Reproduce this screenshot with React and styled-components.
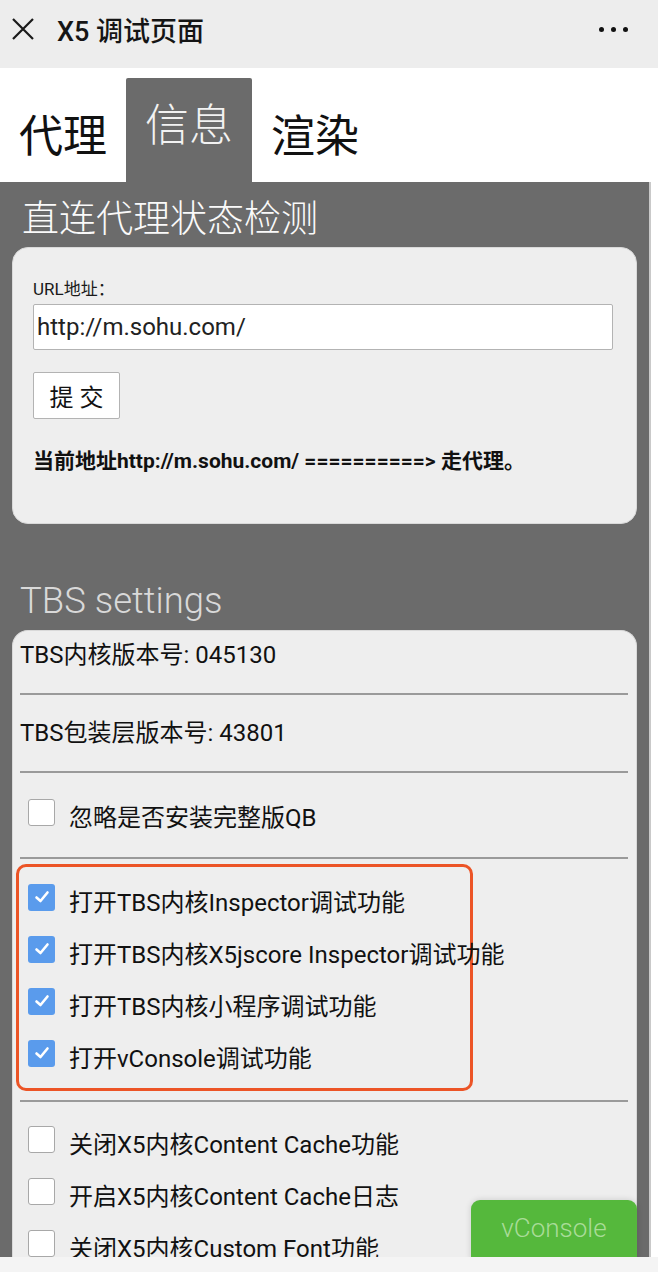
import styled, { createGlobalStyle } from 'styled-components';

const GlobalStyle = createGlobalStyle`
  html, body {
    margin: 0;
    padding: 0;
    background: #fff;
  }
  body {
    font-family: Roboto, "Noto Sans CJK SC", sans-serif;
    color: #111;
  }
  * {
    box-sizing: border-box;
  }
`;

const checkedItems = [
  '打开TBS内核Inspector调试功能',
  '打开TBS内核X5jscore Inspector调试功能',
  '打开TBS内核小程序调试功能',
  '打开vConsole调试功能',
];

const cacheItems = [
  '关闭X5内核Content Cache功能',
  '开启X5内核Content Cache日志',
  '关闭X5内核Custom Font功能',
];

const CloseIcon = () => (
  <svg width='24' height='24' viewBox='0 0 24 24'>
    <path d='M2 2 L22 22 M22 2 L2 22' stroke='#1a1a1a' strokeWidth='2.2' fill='none' />
  </svg>
);

const Check = ({ checked }) => (
  <Box $checked={checked}>
    {checked && (
      <svg width='18' height='18' viewBox='0 0 18 18'>
        <polyline points='3.5,9.5 7.5,13 14.5,4.5' fill='none' stroke='#fff' strokeWidth='2.6' strokeLinecap='round' strokeLinejoin='round' />
      </svg>
    )}
  </Box>
);

const CheckItem = ({ label, checked }) => (
  <CheckRow>
    <Check checked={checked} />
    <span>{label}</span>
  </CheckRow>
);

const App = () => {
  return (
    <>
      <GlobalStyle />
      <Screen>
        <Header>
          <HeaderLeft>
            <CloseIcon />
            <Title>X5 调试页面</Title>
          </HeaderLeft>
          <Dots>
            <i />
            <i />
            <i />
          </Dots>
        </Header>

        <Main>
          <Tabs>
            <Tab>代理</Tab>
            <Tab $active>信息</Tab>
            <Tab>渲染</Tab>
          </Tabs>

          <Panel>
            <SectionTitle>直连代理状态检测</SectionTitle>
            <FormCard>
              <Label>URL地址：</Label>
              <UrlInput defaultValue='http://m.sohu.com/' />
              <SubmitButton>提 交</SubmitButton>
              <Result>当前地址http://m.sohu.com/ ==========&gt; 走代理。</Result>
            </FormCard>

            <SectionTitle $light>TBS settings</SectionTitle>
            <SettingsCard>
              <InfoRow $first>TBS内核版本号: 045130</InfoRow>
              <Divider />
              <InfoRow>TBS包装层版本号: 43801</InfoRow>
              <Divider />
              <CheckGroup $pad='16px 0'>
                <CheckItem label='忽略是否安装完整版QB' />
              </CheckGroup>
              <Divider />
              <Highlight>
                {checkedItems.map((item) => (
                  <CheckItem key={item} label={item} checked />
                ))}
              </Highlight>
              <Divider />
              <CheckGroup $pad='14px 0 0'>
                {cacheItems.map((item) => (
                  <CheckItem key={item} label={item} />
                ))}
              </CheckGroup>
            </SettingsCard>
          </Panel>
        </Main>

        <VConsoleButton>vConsole</VConsoleButton>
        <BottomStrip />
      </Screen>
    </>
  );
};

const Screen = styled.div`
  position: relative;
  height: 1272px;
  display: flex;
  flex-direction: column;
  overflow: hidden;
`;

const Header = styled.header`
  height: 68px;
  flex-shrink: 0;
  background: #ededed;
  display: flex;
  align-items: center;
  justify-content: space-between;
  padding: 0 30px 10px 11px;
`;

const HeaderLeft = styled.div`
  display: flex;
  align-items: center;
  gap: 22px;
`;

const Title = styled.h1`
  margin: 0;
  font-size: 27px;
  font-weight: 500;
  color: #151515;
`;

const Dots = styled.div`
  display: flex;
  gap: 7px;
  i {
    width: 5px;
    height: 5px;
    border-radius: 50%;
    background: #111;
  }
`;

const Main = styled.div`
  flex: 1;
  display: flex;
  flex-direction: column;
  overflow: hidden;
`;

const Tabs = styled.nav`
  height: 114px;
  flex-shrink: 0;
  display: flex;
  align-items: flex-end;
  background: #fff;
`;

const Tab = styled.div`
  height: ${(p) => (p.$active ? '104px' : '90px')};
  padding: 0 19px;
  display: flex;
  align-items: center;
  font-size: 44px;
  line-height: 1;
  border-radius: 2px 2px 0 0;
  background: ${(p) => (p.$active ? '#6b6b6b' : 'transparent')};
  color: ${(p) => (p.$active ? '#f2f2f2' : '#111')};
  font-weight: ${(p) => (p.$active ? 300 : 400)};
  padding-bottom: ${(p) => (p.$active ? '8px' : '0')};
`;

const Panel = styled.section`
  flex: 1;
  width: 651px;
  background: #6b6b6b;
  border-right: 2px solid #c9c9c9;
  padding: 16px 12px 0;
`;

const SectionTitle = styled.h2`
  margin: ${(p) => (p.$light ? '55px 0 7px 8px' : '0 0 5px 10px')};
  font-size: ${(p) => (p.$light ? '36.5px' : '37px')};
  line-height: 44px;
  font-weight: 300;
  color: ${(p) => (p.$light ? '#d9d9d9' : '#fafafa')};
`;

const Card = styled.div`
  background: #eeeeee;
  border: 1px solid #d9d9d9;
  border-radius: 16px;
`;

const FormCard = styled(Card)`
  padding: 30px 23px 49px 20px;
`;

const Label = styled.div`
  font-size: 17px;
  line-height: 22px;
  color: #1a1a1a;
`;

const UrlInput = styled.input`
  display: block;
  width: 100%;
  height: 46px;
  margin-top: 4px;
  padding: 0 3px;
  border: 1.5px solid #b3b3b3;
  border-radius: 2px;
  background: #fff;
  font-family: Roboto, sans-serif;
  font-size: 24px;
  color: #222;
  outline: none;
`;

const SubmitButton = styled.button`
  display: block;
  width: 87px;
  height: 47px;
  margin-top: 22px;
  border: 1.5px solid #b3b3b3;
  border-radius: 2px;
  background: #fff;
  font-family: Roboto, "Noto Sans CJK SC", sans-serif;
  font-size: 24px;
  color: #111;
  padding: 0;
`;

const Result = styled.p`
  margin: 29px 0 0;
  font-size: 21px;
  line-height: 26px;
  font-weight: 700;
  color: #111;
`;

const SettingsCard = styled(Card)`
  padding: 0 8px 0 7px;
  border-bottom: none;
  border-radius: 16px 16px 0 0;
`;

const InfoRow = styled.div`
  padding: ${(p) => (p.$first ? '11px' : '25px')} 0 25px 0;
  font-size: 24px;
  line-height: 26px;
  color: #111;
`;

const Divider = styled.hr`
  margin: 0;
  border: none;
  height: 2px;
  background: #9a9a9a;
`;

const CheckGroup = styled.div`
  padding: ${(p) => p.$pad};
`;

const Highlight = styled.div`
  width: 457px;
  margin: 5px 0 9px -4px;
  padding: 7px 0 6px;
  border: 3px solid #ec5426;
  border-radius: 10px;
`;

const CheckRow = styled.div`
  height: 52px;
  display: flex;
  align-items: center;
  gap: 14px;
  padding-left: 8px;
  white-space: nowrap;
  font-size: 24px;
  color: #111;
  ${Highlight} & {
    padding-left: 9px;
  }
`;

const Box = styled.span`
  width: 27px;
  height: 27px;
  flex-shrink: 0;
  margin-bottom: 6px;
  display: flex;
  align-items: center;
  justify-content: center;
  border-radius: 3px;
  background: ${(p) => (p.$checked ? '#5a9bec' : '#fff')};
  border: ${(p) => (p.$checked ? 'none' : '1.5px solid #a8a8a8')};
`;

const VConsoleButton = styled.div`
  position: absolute;
  right: 21px;
  bottom: 6px;
  width: 166px;
  height: 66px;
  padding-bottom: 10px;
  display: flex;
  align-items: center;
  justify-content: center;
  border-radius: 9px;
  background: #55b83c;
  box-shadow: 0 0 6px rgba(0, 0, 0, 0.15);
  color: #a9dc98;
  font-size: 26px;
  font-weight: 300;
  z-index: 1;
`;

const BottomStrip = styled.div`
  height: 15px;
  flex-shrink: 0;
  background: #f4f4f4;
  position: relative;
  z-index: 2;
`;

export default App;
